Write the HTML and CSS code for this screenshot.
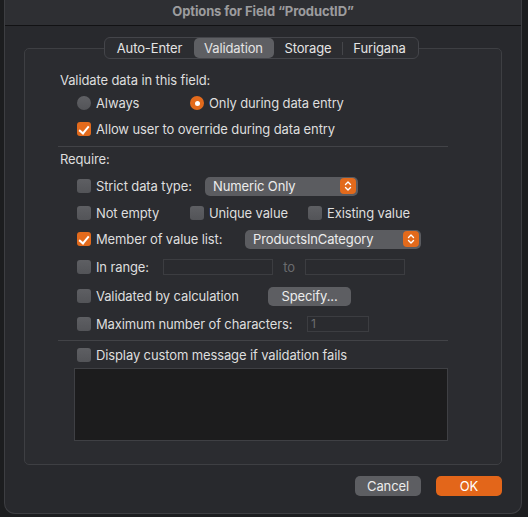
FILE: index.html
```html
<!DOCTYPE html>
<html>
<head>
<meta charset="utf-8">
<link rel="stylesheet" href="styles.css">
</head>
<body>
<div class="window">
  <div class="titlebar">Options for Field “ProductID”</div>
  <div class="content">
    <div class="tabs-wrap">
      <div class="tabs">
        <div class="tab t1">Auto-Enter</div>
        <div class="tab t2 selected">Validation</div>
        <div class="tab t3">Storage</div>
        <div class="tab-sep"></div>
        <div class="tab t4">Furigana</div>
      </div>
    </div>
    <div class="box">
      <div class="row r-label">Validate data in this field:</div>
      <div class="row r-radio">
        <div class="opt w113"><span class="radio"></span><span>Always</span></div>
        <div class="opt"><span class="radio on"></span><span>Only during data entry</span></div>
      </div>
      <div class="row r-allow">
        <div class="opt"><span class="check on"></span><span>Allow user to override during data entry</span></div>
      </div>
      <div class="sep s1"></div>
      <div class="row r-require">Require:</div>
      <div class="row r-strict">
        <div class="opt w128"><span class="check"></span><span>Strict data type:</span></div>
        <div class="popup p-strict"><span>Numeric Only</span><span class="arrows"><svg width="8" height="12" viewBox="0 0 8 12"><path d="M1.5 4.5 L4 2 L6.5 4.5 M1.5 7.5 L4 10 L6.5 7.5" fill="none" stroke="#fff" stroke-width="1.4" stroke-linecap="round" stroke-linejoin="round"/></svg></span></div>
      </div>
      <div class="row r-empty">
        <div class="opt w113"><span class="check"></span><span>Not empty</span></div>
        <div class="opt w118"><span class="check"></span><span>Unique value</span></div>
        <div class="opt"><span class="check"></span><span>Existing value</span></div>
      </div>
      <div class="row r-member">
        <div class="opt w168"><span class="check on"></span><span>Member of value list:</span></div>
        <div class="popup p-member"><span>ProductsInCategory</span><span class="arrows"><svg width="8" height="12" viewBox="0 0 8 12"><path d="M1.5 4.5 L4 2 L6.5 4.5 M1.5 7.5 L4 10 L6.5 7.5" fill="none" stroke="#fff" stroke-width="1.4" stroke-linecap="round" stroke-linejoin="round"/></svg></span></div>
      </div>
      <div class="row r-range">
        <div class="opt w86"><span class="check"></span><span>In range:</span></div>
        <div class="field f-range1"></div>
        <div class="to">to</div>
        <div class="field f-range2"></div>
      </div>
      <div class="row r-calc">
        <div class="opt w191"><span class="check"></span><span>Validated by calculation</span></div>
        <div class="btn b-specify">Specify...</div>
      </div>
      <div class="row r-max">
        <div class="opt w229"><span class="check"></span><span>Maximum number of characters:</span></div>
        <div class="field f-max">1</div>
      </div>
      <div class="sep s2"></div>
      <div class="row r-display">
        <div class="opt"><span class="check"></span><span>Display custom message if validation fails</span></div>
      </div>
      <div class="textarea"></div>
    </div>
    <div class="buttons">
      <div class="btn b-cancel">Cancel</div>
      <div class="btn b-ok">OK</div>
    </div>
  </div>
</div>
</body>
</html>
```
FILE: styles.css
```css
html, body {
  margin: 0;
  padding: 0;
  background: #1c1d1f;
  width: 528px;
  height: 517px;
  overflow: hidden;
}
body {
  font-family: Inter, "Noto Sans", sans-serif;
  font-size: 13px;
  letter-spacing: -0.12px;
  color: #dedede;
}
.window {
  margin-left: 4px;
  width: 516px;
  height: 513px;
  background: #28292d;
  border: 1px solid #3d3e42;
  border-top: none;
  border-radius: 0 0 11px 11px;
  box-sizing: content-box;
}
.titlebar {
  height: 25px;
  line-height: 23px;
  background: #2e2f33;
  border-bottom: 1px solid #121214;
  text-align: center;
  color: #9c9c9e;
  font-weight: 700;
  font-size: 13px;
}
.content {
  padding: 0 19px 0 19px;
}
.tabs-wrap {
  display: flex;
  justify-content: center;
  padding-top: 11px;
  margin-bottom: -11px;
  position: relative;
  z-index: 1;
  padding-right: 4px;
}
.tabs {
  display: flex;
  align-items: center;
  height: 20px;
  background: #2c2d31;
  border: 1px solid #44454a;
  border-radius: 6px;
  padding: 0 1px;
}
.tab {
  height: 20px;
  line-height: 20px;
  text-align: center;
  color: #e4e4e4;
  border-radius: 5px;
}
.t1 { width: 88px; }
.t2 { width: 80px; }
.t3 { width: 69px; }
.t4 { width: 74px; }
.tab.selected {
  background: #5e5f63;
}
.tab-sep {
  width: 1px;
  height: 13px;
  background: #45464a;
  margin-left: -1px;
}
.box {
  background: #2b2c30;
  border: 1px solid #3e3f43;
  border-radius: 5px;
  height: 417px;
  padding: 21px 0 0 0;
  box-sizing: border-box;
}
.row {
  display: flex;
  align-items: center;
  height: 20px;
  padding-left: 52px;
  white-space: nowrap;
}
.r-label, .r-require {
  padding-left: 35px;
}
.r-radio { margin-top: 3px; }
.r-allow { margin-top: 6px; }
.sep {
  height: 1px;
  background: #424347;
  margin-left: 33px;
  margin-right: 53px;
}
.s1 { margin-top: 7px; }
.r-require { margin-top: 2px; }
.r-strict { margin-top: 6px; height: 22px; }
.r-empty { margin-top: 6px; }
.r-member { margin-top: 5px; height: 22px; }
.r-range { margin-top: 7px; }
.r-calc { margin-top: 8px; height: 22px; }
.r-max { margin-top: 7px; }
.s2 { margin-top: 6px; }
.r-display { margin-top: 4px; }
.opt {
  display: flex;
  align-items: center;
  gap: 5px;
}
.w113 { width: 113px; }
.w118 { width: 118px; }
.w128 { width: 128px; }
.w168 { width: 168px; }
.w86 { width: 86px; }
.w191 { width: 191px; }
.w229 { width: 229px; }
.check {
  width: 14px;
  height: 14px;
  border-radius: 3px;
  background: linear-gradient(#5e5f63, #535458);
  box-sizing: border-box;
  flex: none;
  position: relative;
}
.check.on {
  background: #e26a1c;
}
.check.on::after {
  content: "";
  position: absolute;
  left: 4px;
  top: 1.5px;
  width: 4px;
  height: 8px;
  border-right: 2px solid #fff;
  border-bottom: 2px solid #fff;
  transform: rotate(40deg);
}
.radio {
  width: 14px;
  height: 14px;
  border-radius: 50%;
  background: linear-gradient(#606165, #535458);
  flex: none;
  position: relative;
}
.radio.on {
  background: #e26a1c;
}
.radio.on::after {
  content: "";
  position: absolute;
  left: 4.5px;
  top: 4.5px;
  width: 5px;
  height: 5px;
  border-radius: 50%;
  background: #fff;
}
.popup {
  display: flex;
  align-items: center;
  justify-content: space-between;
  height: 19px;
  background: #5b5c60;
  border-radius: 5px;
  padding-left: 8px;
  padding-right: 2px;
  box-sizing: border-box;
  color: #ececec;
}
.p-strict { width: 153px; }
.p-member { width: 176px; }
.arrows {
  width: 16px;
  height: 16px;
  border-radius: 4px;
  background: #e26a1c;
  display: flex;
  align-items: center;
  justify-content: center;
}
.field {
  height: 16px;
  border: 1px solid #3c3d41;
  background: #2a2b2f;
  box-sizing: border-box;
  color: #6c6d70;
  font-size: 12px;
  line-height: 14px;
  padding-left: 3px;
}
.f-range1 { width: 110px; }
.f-range2 { width: 100px; }
.to {
  width: 32px;
  text-align: center;
  color: #6a6b6e;
}
.f-max { width: 62px; margin-left: 1px; }
.btn {
  display: flex;
  align-items: center;
  justify-content: center;
  border-radius: 5px;
  color: #ececec;
  background: #5d5e62;
}
.b-specify {
  width: 83px;
  height: 19px;
}
.textarea {
  margin: 3px 53px 0 49px;
  height: 73px;
  background: #1c1c1d;
  border: 1px solid #3f4044;
  box-sizing: border-box;
}
.buttons {
  display: flex;
  justify-content: flex-end;
  gap: 15px;
  margin-top: 11px;
  padding-right: 0;
}
.b-cancel {
  width: 66px;
  height: 20px;
}
.b-ok {
  width: 66px;
  height: 20px;
  background: #e3661a;
  color: #fff;
}
```
